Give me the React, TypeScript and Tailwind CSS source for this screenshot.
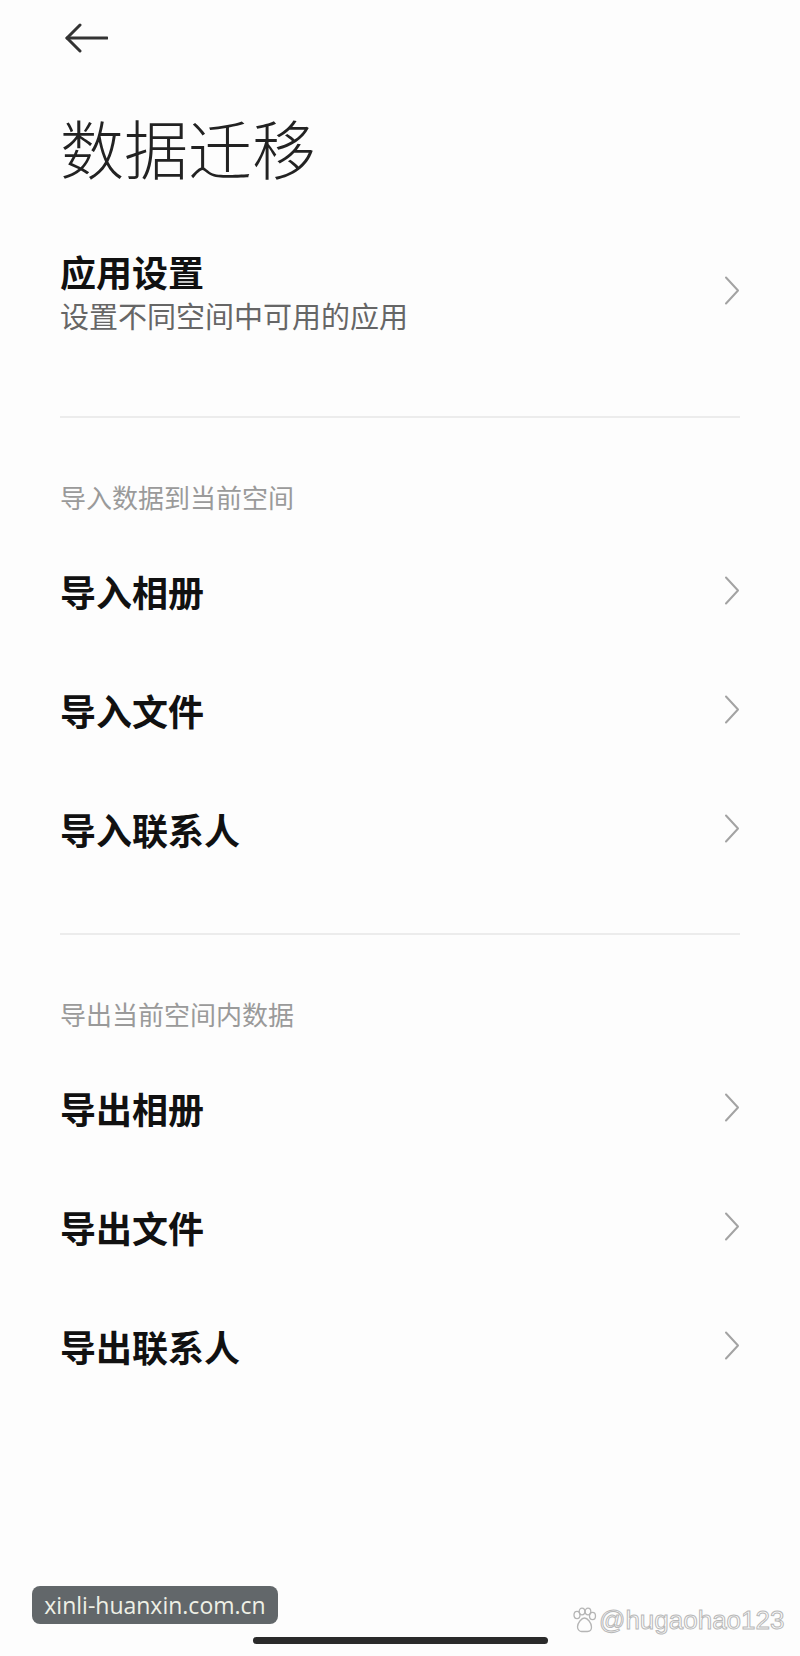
import { ReactNode } from "react";

const cjk = "font-['Noto_Sans_CJK_SC','Noto_Sans',sans-serif]";

function Chevron() {
  return (
    <svg width="16" height="29" viewBox="0 0 16 29" fill="none" className="shrink-0">
      <polyline
        points="2,1.5 14,14.5 2,27.5"
        stroke="#a3a3a3"
        strokeWidth="2"
        strokeLinecap="round"
        strokeLinejoin="round"
      />
    </svg>
  );
}

function BackArrow() {
  return (
    <svg width="44" height="30" viewBox="0 0 44 30" fill="none">
      <line x1="3" y1="15" x2="43" y2="15" stroke="#333" strokeWidth="3" strokeLinecap="round" />
      <polyline
        points="16,2 3,15 16,28"
        stroke="#333"
        strokeWidth="3"
        strokeLinecap="round"
        strokeLinejoin="round"
      />
    </svg>
  );
}

function Row({ children }: { children: ReactNode }) {
  return (
    <div className="flex h-[119px] items-center justify-between">
      <span className="text-[36px] font-bold leading-[36px] text-[#111]">{children}</span>
      <Chevron />
    </div>
  );
}

function SectionHeader({ children }: { children: ReactNode }) {
  return (
    <div className="pt-[67px] pb-[22px] text-[26px] leading-[24px] text-[#9a9a9a]">{children}</div>
  );
}

function Divider() {
  return <div className="h-[2px] bg-[#ececec]" />;
}

function Paw() {
  return (
    <svg width="26" height="26" viewBox="0 0 26 26" fill="none" stroke="#b5b5b5" strokeWidth="1.3">
      <ellipse cx="6" cy="8" rx="3" ry="3.6" />
      <ellipse cx="11" cy="4.5" rx="2.8" ry="3.4" />
      <ellipse cx="17" cy="4.5" rx="2.8" ry="3.4" />
      <ellipse cx="21.5" cy="9" rx="3" ry="3.6" />
      <path d="M13.5 11c-3 0-7 5-7 9 0 3 2.5 4.5 4 4.5h6c2 0 4-1.5 4-4.5 0-4-4-9-7-9z" />
    </svg>
  );
}

export default function App() {
  return (
    <div className={`relative flex min-h-[1656px] w-[800px] flex-col bg-[#fdfdfd] ${cjk}`}>
      <div className="flex h-[76px] items-center pl-[64px]">
        <BackArrow />
      </div>

      <div className="px-[60px]">
        <h1 className="pt-[38px] text-[64px] font-light leading-[64px] text-[#222]">数据迁移</h1>

        <div className="mt-[75px] flex items-center justify-between">
          <div className="flex flex-col gap-[11px]">
            <span className="text-[36px] font-bold leading-[36px] text-[#111]">应用设置</span>
            <span className="text-[29px] leading-[30px] text-[#666]">设置不同空间中可用的应用</span>
          </div>
          <div className="-mt-[2px]">
            <Chevron />
          </div>
        </div>

        <div className="mt-[86px]">
          <Divider />
        </div>

        <SectionHeader>导入数据到当前空间</SectionHeader>
        <Row>导入相册</Row>
        <Row>导入文件</Row>
        <Row>导入联系人</Row>

        <div className="mt-[45px]">
          <Divider />
        </div>

        <SectionHeader>导出当前空间内数据</SectionHeader>
        <Row>导出相册</Row>
        <Row>导出文件</Row>
        <Row>导出联系人</Row>
      </div>

      <div className="mt-auto flex justify-center pb-[12px]">
        <div className="h-[7px] w-[295px] rounded-full bg-[#2a2a2a]" />
      </div>

      <div className="absolute left-[32px] top-[1586px] flex h-[38px] w-[246px] items-center justify-center rounded-[8px] bg-[#62676a] font-['Open_Sans',sans-serif] text-[23px] leading-none text-[#eef0e6]">
        xinli-huanxin.com.cn
      </div>

      <div className="absolute left-[571px] top-[1605px] flex items-center gap-[2px]">
        <Paw />
        <span className="font-['Liberation_Sans',sans-serif] text-[26px] leading-[30px] text-transparent [-webkit-text-stroke:1px_#b8b8b8]">
          @hugaohao123
        </span>
      </div>
    </div>
  );
}
